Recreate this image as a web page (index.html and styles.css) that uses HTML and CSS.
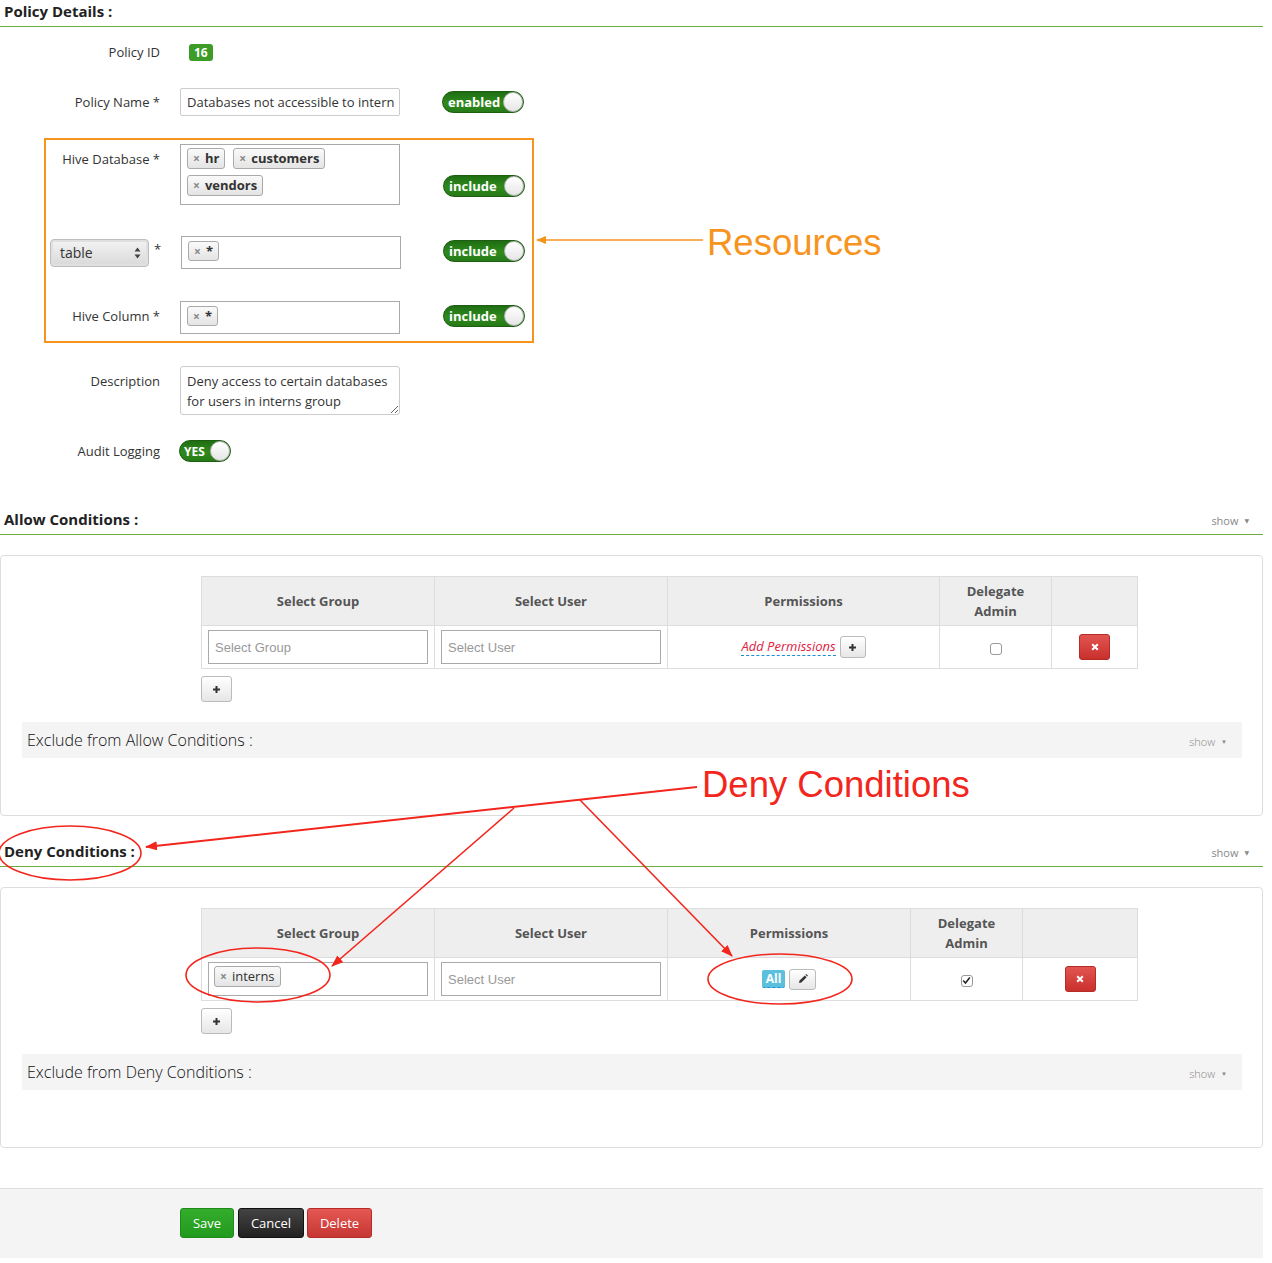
FILE: index.html
```html
<!DOCTYPE html>
<html>
<head>
<meta charset="utf-8">
<link rel="stylesheet" href="styles.css">
</head>
<body>
<div class="page">
  <div class="main">
    <div class="sec-head"><h2>Policy Details :</h2></div>

    <div class="row r-id">
      <div class="lbl">Policy ID</div>
      <span class="badge">16</span>
    </div>

    <div class="row r-name">
      <div class="lbl">Policy Name *</div>
      <div class="inp ctl">Databases not accessible to intern</div>
      <div class="switch sw-enabled"><span class="sw-text">enabled</span><span class="knob"></span></div>
    </div>

    <div class="resbox">
      <div class="row r-db">
        <div class="lbl lbl-in">Hive Database *</div>
        <div class="tagbox tb-db ctl">
          <div class="tagline">
            <span class="tag"><span class="tx">×</span>hr</span>
            <span class="tag"><span class="tx">×</span>customers</span>
          </div>
          <div class="tagline">
            <span class="tag"><span class="tx">×</span>vendors</span>
          </div>
        </div>
        <div class="switch sw-inc sw-db"><span class="sw-text">include</span><span class="knob"></span></div>
      </div>

      <div class="row r-tbl">
        <div class="fake-select">table
          <svg class="sel-arrows" width="7" height="12" viewBox="0 0 7 12"><path d="M3.5 0.5 L6.5 4.5 H0.5 Z M3.5 11.5 L6.5 7.5 H0.5 Z" fill="#444"/></svg>
        </div>
        <span class="star">*</span>
        <div class="tagbox tb-one tb-tbl">
          <span class="tag tag-sm"><span class="tx">×</span>*</span>
        </div>
        <div class="switch sw-inc sw-tbl"><span class="sw-text">include</span><span class="knob"></span></div>
      </div>

      <div class="row r-col">
        <div class="lbl lbl-in lbl-col">Hive Column *</div>
        <div class="tagbox tb-one ctl">
          <span class="tag tag-sm"><span class="tx">×</span>*</span>
        </div>
        <div class="switch sw-inc sw-col"><span class="sw-text">include</span><span class="knob"></span></div>
      </div>
    </div>

    <div class="row r-desc">
      <div class="lbl lbl-top">Description</div>
      <textarea class="ta ctl" readonly>Deny access to certain databases for users in interns group</textarea>
    </div>

    <div class="row r-audit">
      <div class="lbl">Audit Logging</div>
      <div class="switch sw-yes"><span class="sw-text">YES</span><span class="knob"></span></div>
    </div>

    <div class="sec-head sh-allow"><h2>Allow Conditions :</h2><span class="show">show <span class="caret">▼</span></span></div>

    <div class="panel">
      <table class="cond">
        <colgroup><col class="c1"><col class="c2"><col class="c3a"><col class="c4"><col class="c5a"></colgroup>
        <tr class="hr">
          <th>Select Group</th><th>Select User</th><th>Permissions</th><th>Delegate<br>Admin</th><th></th>
        </tr>
        <tr class="br">
          <td><div class="sel-inp ph">Select Group</div></td>
          <td><div class="sel-inp ph">Select User</div></td>
          <td class="ctr"><span class="addperm">Add Permissions</span><span class="btn-sm"><svg width="9" height="9" viewBox="0 0 9 9"><path d="M4.5 1v7M1 4.5h7" stroke="#333" stroke-width="2"/></svg></span></td>
          <td class="ctr"><span class="cb"></span></td>
          <td class="ctr"><span class="btn-del"><svg width="8" height="8" viewBox="0 0 8 8"><path d="M1.2 1.2l5.6 5.6M6.8 1.2l-5.6 5.6" stroke="#fff" stroke-width="2"/></svg></span></td>
        </tr>
      </table>
      <span class="btn-add"><svg width="9" height="9" viewBox="0 0 9 9"><path d="M4.5 1v7M1 4.5h7" stroke="#333" stroke-width="2"/></svg></span>
      <div class="excl"><span>Exclude from Allow Conditions :</span><span class="show">show <span class="caret">▼</span></span></div>
    </div>

    <div class="sec-head sh-deny"><h2>Deny Conditions :</h2><span class="show">show <span class="caret">▼</span></span></div>

    <div class="panel">
      <table class="cond">
        <colgroup><col class="c1"><col class="c2"><col class="c3b"><col class="c4"><col class="c5b"></colgroup>
        <tr class="hr">
          <th>Select Group</th><th>Select User</th><th>Permissions</th><th>Delegate<br>Admin</th><th></th>
        </tr>
        <tr class="br">
          <td><div class="sel-inp"><span class="tag tag-plain"><span class="tx">×</span>interns</span></div></td>
          <td><div class="sel-inp ph">Select User</div></td>
          <td class="ctr"><span class="allbadge">All</span><span class="btn-pen"><svg width="10" height="10" viewBox="0 0 10 10"><path d="M1 9 L1.6 6.6 L6.8 1.4 L8.6 3.2 L3.4 8.4 Z" fill="#333"/><path d="M7.4 0.8 L8.2 0 L10 1.8 L9.2 2.6 Z" fill="#333"/></svg></span></td>
          <td class="ctr"><span class="cb cb-on"><svg width="9" height="9" viewBox="0 0 9 9"><path d="M1.2 4.6 L3.5 7 L7.8 1.5" fill="none" stroke="#222" stroke-width="1.5"/></svg></span></td>
          <td class="ctr"><span class="btn-del"><svg width="8" height="8" viewBox="0 0 8 8"><path d="M1.2 1.2l5.6 5.6M6.8 1.2l-5.6 5.6" stroke="#fff" stroke-width="2"/></svg></span></td>
        </tr>
      </table>
      <span class="btn-add"><svg width="9" height="9" viewBox="0 0 9 9"><path d="M4.5 1v7M1 4.5h7" stroke="#333" stroke-width="2"/></svg></span>
      <div class="excl"><span>Exclude from Deny Conditions :</span><span class="show">show <span class="caret">▼</span></span></div>
    </div>

    <div class="footer">
      <span class="btn b-save">Save</span><span class="btn b-cancel">Cancel</span><span class="btn b-delete">Delete</span>
    </div>
  </div>

  <svg class="annot" width="1272" height="1263" viewBox="0 0 1272 1263">
    <defs>
      <marker id="ao" markerWidth="10" markerHeight="8" refX="9" refY="4" orient="auto" markerUnits="userSpaceOnUse">
        <path d="M0 0 L10 4 L0 8 Z" fill="#f7941d"/>
      </marker>
      <marker id="ar" markerWidth="12" markerHeight="9" refX="11" refY="4.5" orient="auto" markerUnits="userSpaceOnUse">
        <path d="M0 0 L12 4.5 L0 9 Z" fill="#f2261d"/>
      </marker>
    </defs>
    <line x1="703" y1="240" x2="537" y2="240" stroke="#f7941d" stroke-width="1.6" marker-end="url(#ao)"/>
    <text x="707" y="255" class="ann-text" fill="#f7941d">Resources</text>

    <text x="702" y="797" class="ann-text" fill="#f2261d">Deny Conditions</text>
    <line x1="697" y1="787" x2="146" y2="847" stroke="#f2261d" stroke-width="2" marker-end="url(#ar)"/>
    <line x1="514" y1="808" x2="332" y2="966" stroke="#f2261d" stroke-width="1.6" marker-end="url(#ar)"/>
    <line x1="580" y1="800" x2="732" y2="956" stroke="#f2261d" stroke-width="1.6" marker-end="url(#ar)"/>

    <ellipse cx="70" cy="853" rx="71" ry="27" fill="none" stroke="#f2261d" stroke-width="1.6"/>
    <ellipse cx="258" cy="975" rx="72" ry="27" fill="none" stroke="#f2261d" stroke-width="1.6"/>
    <ellipse cx="780" cy="979" rx="72" ry="25" fill="none" stroke="#f2261d" stroke-width="1.6"/>
  </svg>
</div>
</body>
</html>
```

FILE: styles.css
```css
* { box-sizing: border-box; }
html, body { margin: 0; padding: 0; background: #fff; }
body {
  font-family: "Open Sans", "DejaVu Sans", sans-serif;
  font-size: 13px;
  color: #333;
}
.page { position: relative; width: 1272px; height: 1263px; overflow: hidden; }
.main { width: 1263px; }

/* section headers */
.sec-head {
  display: flex;
  justify-content: space-between;
  align-items: flex-end;
  height: 27px;
  border-bottom: 1px solid #6fae3c;
  padding: 0 14px 0 4px;
}
.sec-head h2 {
  margin: 0;
  font-size: 15px;
  font-weight: 700;
  line-height: 20px;
  padding-bottom: 5px;
  color: #222;
}
.show {
  font-size: 11px;
  line-height: 14px;
  color: #888;
  padding-bottom: 6px;
}
.caret { font-size: 6px; vertical-align: 2px; margin-left: 3px; }
.sh-allow { margin-top: 46px; }
.sh-deny { margin-top: 24px; }

/* form rows */
.row { display: flex; align-items: center; }
.lbl { width: 160px; flex: none; text-align: right; font-size: 13px; color: #333; line-height: 18px; }
.lbl-in { width: 114px; }
.lbl-top { align-self: flex-start; padding-top: 6px; line-height: 18px; }
.ctl { margin-left: 20px; }

.r-id { margin-top: 14px; height: 22px; }
.badge {
  margin-left: 29px;
  background: #3d9b27;
  color: #fff;
  font-weight: 700;
  font-size: 12px;
  height: 17px;
  line-height: 17px;
  padding: 0 5px;
  border-radius: 3px;
}

.r-name { margin-top: 25px; height: 28px; }
.inp {
  width: 220px;
  height: 28px;
  border: 1px solid #ccc;
  border-radius: 2px;
  padding: 0 6px;
  line-height: 26px;
  font-size: 13px;
  color: #333;
  white-space: nowrap;
  overflow: hidden;
}

/* toggles */
.switch {
  position: relative;
  height: 22px;
  border-radius: 11px;
  background: linear-gradient(#1f6e12, #2f8a1e 55%, #267a17);
  border: 1px solid #1d5e12;
  color: #fff;
  font-weight: 700;
  font-size: 13px;
  line-height: 20px;
  flex: none;
}
.sw-text { padding-left: 5px; }
.knob {
  position: absolute;
  right: 0;
  top: 0;
  width: 20px;
  height: 20px;
  border-radius: 50%;
  background: linear-gradient(#ffffff, #e6e6e6);
  border: 1px solid #b5b5b5;
}
.sw-enabled { width: 82px; margin-left: 42px; }
.sw-inc { width: 82px; }
.sw-yes { width: 52px; margin-left: 19px; }
.sw-yes .sw-text { padding-left: 4px; font-size: 12px; }

/* resources box */
.resbox {
  margin-top: 22px;
  margin-left: 44px;
  width: 490px;
  height: 205px;
  border: 2px solid #f7941d;
}
.r-db { margin-top: 4px; align-items: flex-start; height: 61px; }
.r-db .lbl { padding-top: 6px; }
.tagbox {
  width: 220px;
  border: 1px solid #aaa;
  background: #fff;
  flex: none;
}
.tb-db { height: 61px; padding: 3px 6px; }
.tagline { display: flex; gap: 8px; margin-bottom: 6px; }
.sw-db { align-self: flex-end; margin-bottom: 8px; margin-left: 43px; }

.tag {
  display: inline-flex;
  align-items: center;
  height: 21px;
  padding: 0 5px;
  border: 1px solid #aaa;
  border-radius: 3px;
  background: linear-gradient(#fafafa, #e4e4e4);
  font-weight: 700;
  font-size: 13px;
  color: #333;
  line-height: 19px;
}
.tx { color: #888; font-size: 12px; font-weight: 700; margin-right: 5px; }
.tag-sm { height: 20px; }
.tag-plain { font-weight: 400; }

.r-tbl { margin-top: 31px; height: 33px; }
.fake-select {
  position: relative;
  margin-left: 4px;
  margin-top: 1px;
  width: 99px;
  height: 28px;
  border: 1px solid #bdbdbd;
  border-radius: 4px;
  background: linear-gradient(#f3f3f3, #d9d9d9);
  box-shadow: inset 0 0 0 2px #e0e0e0;
  font-size: 14px;
  line-height: 26px;
  padding-left: 9px;
  color: #333;
  flex: none;
}
.sel-arrows { position: absolute; right: 7px; top: 7px; }
.star { margin-left: 5px; width: 7px; align-self: flex-start; padding-top: 4px; font-size: 13px; line-height: 18px; }
.tb-one { height: 33px; padding: 4px 6px; }
.tb-tbl { margin-left: 20px; }
.sw-tbl { margin-left: 42px; align-self: flex-start; margin-top: 4px; }
.r-col { margin-top: 32px; height: 33px; align-items: flex-start; }
.lbl-col { padding-top: 6px; }
.sw-col { margin-left: 43px; margin-top: 4px; }

/* description */
.r-desc { margin-top: 23px; align-items: flex-start; }
.ta {
  width: 220px;
  height: 49px;
  border: 1px solid #ccc;
  border-radius: 3px;
  padding: 4px 6px;
  font-family: "Open Sans", "DejaVu Sans", sans-serif;
  font-size: 13px;
  line-height: 20px;
  color: #333;
  resize: both;
  overflow: hidden;
  display: block;
  margin-top: 0;
  margin-bottom: 0;
  margin-right: 0;
}
.r-audit { margin-top: 25px; height: 22px; }

/* panels */
.panel {
  margin-top: 20px;
  border: 1px solid #ddd;
  border-radius: 4px;
  padding: 20px 20px 57px 21px;
}
table.cond {
  margin-left: 179px;
  border-collapse: collapse;
  table-layout: fixed;
  width: 936px;
}
col.c1, col.c2 { width: 233px; }
col.c3a { width: 272px; }
col.c3b { width: 243px; }
col.c4 { width: 112px; }
col.c5a { width: 86px; }
col.c5b { width: 115px; }
table.cond th, table.cond td { border: 1px solid #ddd; }
table.cond tr.hr th {
  height: 49px;
  background: #eee;
  font-size: 13px;
  font-weight: 700;
  color: #555;
  line-height: 20px;
  padding: 0;
  text-align: center;
}
table.cond tr.br td { height: 43px; padding: 3px 6px; vertical-align: middle; }
.ctr { text-align: center; }
.sel-inp {
  width: 220px;
  height: 34px;
  border: 1px solid #aaa;
  background: #fff;
  padding: 3px 5px;
  font-size: 13px;
  display: flex;
  align-items: center;
}
.sel-inp.ph { font-family: "Liberation Sans", Arial, sans-serif; color: #999; padding-left: 6px; }
.sel-inp .tag { height: 21px; margin-top: -6px; }

.addperm {
  font-style: italic;
  color: #e0213f;
  border-bottom: 1px dashed #1a8fd6;
  font-size: 13px;
  line-height: 17px;
  display: inline-block;
  vertical-align: middle;
}
.btn-sm {
  display: inline-flex;
  align-items: center;
  justify-content: center;
  width: 26px;
  height: 22px;
  margin-left: 4px;
  border: 1px solid #bbb;
  border-radius: 3px;
  background: linear-gradient(#fff, #e6e6e6);
  vertical-align: middle;
}
.cb {
  display: inline-flex;
  align-items: center;
  justify-content: center;
  width: 12px;
  height: 12px;
  border: 1px solid #999;
  border-radius: 3px;
  background: #fff;
  vertical-align: middle;
}
.btn-del {
  display: inline-flex;
  align-items: center;
  justify-content: center;
  width: 31px;
  height: 26px;
  border-radius: 3px;
  background: linear-gradient(#e25450, #c9302c);
  border: 1px solid #b52b27;
  vertical-align: middle;
}
.btn-add {
  display: flex;
  align-items: center;
  justify-content: center;
  margin-left: 179px;
  margin-top: 7px;
  width: 31px;
  height: 26px;
  border: 1px solid #bbb;
  border-radius: 3px;
  background: linear-gradient(#fff, #e6e6e6);
}
.allbadge {
  display: inline-block;
  vertical-align: middle;
  background: #5bc0de;
  color: #fff;
  font-weight: 700;
  font-size: 12px;
  height: 18px;
  line-height: 18px;
  padding: 0 4px;
  border-radius: 2px;
  border-bottom: 1px dashed #1a8fd6;
}
.btn-pen {
  display: inline-flex;
  align-items: center;
  justify-content: center;
  width: 27px;
  height: 21px;
  margin-left: 4px;
  border: 1px solid #bbb;
  border-radius: 3px;
  background: linear-gradient(#fff, #e6e6e6);
  vertical-align: middle;
}

.excl {
  margin-top: 20px;
  height: 36px;
  background: #f4f4f4;
  display: flex;
  align-items: center;
  justify-content: space-between;
  padding: 0 15px 0 5px;
  font-size: 16px;
  font-weight: 300;
  color: #111;
}
.excl .show { padding-bottom: 0; padding-top: 4px; }

/* footer */
.footer {
  margin-top: 40px;
  height: 70px;
  background: #f4f4f4;
  border-top: 1px solid #ddd;
  padding: 19px 0 0 180px;
  display: flex;
  align-items: flex-start;
}
.btn {
  display: inline-block;
  height: 30px;
  line-height: 28px;
  border-radius: 3px;
  color: #fff;
  font-size: 13px;
  text-align: center;
}
.b-save { width: 54px; background: linear-gradient(#34ad2c, #229a1e); border: 1px solid #1f8a1b; }
.b-cancel { width: 66px; margin-left: 4px; background: linear-gradient(#444, #222); border: 1px solid #111; }
.b-delete { width: 65px; margin-left: 3px; background: linear-gradient(#e55753, #c63733); border: 1px solid #b52b27; }

/* annotation overlay */
.annot { position: absolute; left: 0; top: 0; pointer-events: none; }
.ann-text { font-family: "Liberation Sans", Arial, sans-serif; font-size: 36.5px; }
```
